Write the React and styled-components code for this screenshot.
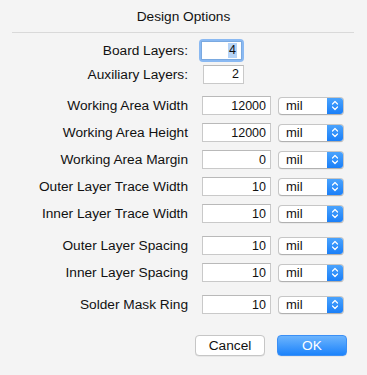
import React from 'react'
import styled, { createGlobalStyle } from 'styled-components'

// Global
const Global = createGlobalStyle`
  html, body {
    margin: 0;
    padding: 0;
    background: #f4f4f4;
  }
  body {
    font-family: "Liberation Sans", Arial, sans-serif;
    font-size: 13px;
    color: #111;
  }
`

// Styling
const Dialog = styled.div`
  width: 367px;
  height: 375px;
  background: #f4f4f4;
  display: flex;
  flex-direction: column;
  overflow: hidden;
`
const Title = styled.div`
  height: 32px;
  line-height: 33px;
  text-align: center;
  font-size: 13.7px;
`
const Separator = styled.div`
  height: 1px;
  margin: 0 13px 0 12px;
  background: #d9d9d9;
`
const Group = styled.div`
  display: flex;
  flex-direction: column;
  margin-top: ${p => p.$gap || 0}px;
`
const Row = styled.div`
  display: flex;
  align-items: center;
  height: ${p => p.$h || 27}px;
`
const Label = styled.div`
  width: 188px;
  text-align: right;
  font-size: 13.7px;
  white-space: nowrap;
`
const Field = styled.div`
  box-sizing: border-box;
  width: ${p => p.$w}px;
  height: ${p => p.$h || 19}px;
  margin-left: ${p => p.$ml || 14}px;
  background: #fff;
  border: 1px solid #c9c9c9;
  border-top-color: #b9b9b9;
  display: flex;
  align-items: center;
  justify-content: flex-end;
  padding-right: 4px;
  font-size: 12.5px;
`
const FocusRing = styled.div`
  margin-left: 11px;
  padding: 2px;
  border-radius: 4px;
  background: #8ab9f2;
  display: flex;
`
const FocusField = styled(Field)`
  margin-left: 0;
  border-color: #7aa9e0;
`
const Selected = styled.span`
  background: #b5d3f7;
  padding: 0 1px;
  line-height: 15px;
`
const Select = styled.div`
  box-sizing: border-box;
  width: 66px;
  height: 18px;
  margin-left: 7px;
  border: 1px solid #c6c6c6;
  border-bottom-color: #b0b0b0;
  border-radius: 4px;
  background: #fff;
  display: flex;
  align-items: stretch;
  overflow: hidden;
  box-shadow: 0 0.5px 0.5px rgba(0, 0, 0, 0.08);
`
const SelectText = styled.div`
  flex: 1;
  display: flex;
  align-items: center;
  padding-left: 7px;
  font-size: 13px;
`
const Stepper = styled.div`
  width: 16px;
  background: linear-gradient(#4aa3fd, #1a7ff8);
  display: flex;
  align-items: center;
  justify-content: center;
`
const Buttons = styled.div`
  display: flex;
  justify-content: flex-end;
  gap: 12px;
  padding-right: 20px;
  margin-top: 17px;
`
const Button = styled.div`
  box-sizing: border-box;
  width: 70px;
  height: 21px;
  border-radius: 4px;
  display: flex;
  align-items: center;
  justify-content: center;
  font-size: 13.7px;
  background: ${p => (p.$primary ? 'linear-gradient(#6cb4fd, #1c83fb)' : '#fff')};
  color: ${p => (p.$primary ? '#fff' : '#111')};
  border: 1px solid ${p => (p.$primary ? '#3b8ff5' : '#c6c6c6')};
  box-shadow: 0 0.5px 0.5px rgba(0, 0, 0, 0.1);
`

function Chevrons() {
  return (
    <svg width="8" height="11" viewBox="0 0 8 11">
      <path d="M1.5 4 L4 1.5 L6.5 4 M1.5 7 L4 9.5 L6.5 7" fill="none" stroke="#fff" strokeWidth="1.2" strokeLinecap="round" strokeLinejoin="round" />
    </svg>
  )
}

function UnitRow({ label, value }) {
  return (
    <Row>
      <Label>{label}</Label>
      <Field $w={69}>{value}</Field>
      <Select>
        <SelectText>mil</SelectText>
        <Stepper><Chevrons /></Stepper>
      </Select>
    </Row>
  )
}

function App() {
  return (
    <Dialog>
      <Global />
      <Title>Design Options</Title>
      <Separator />
      <Group $gap={5}>
        <Row $h={24}>
          <Label>Board Layers:</Label>
          <FocusRing>
            <FocusField $w={41}><Selected>4</Selected></FocusField>
          </FocusRing>
        </Row>
        <Row $h={24}>
          <Label>Auxiliary Layers:</Label>
          <Field $w={41} $ml={15}>2</Field>
        </Row>
      </Group>
      <Group $gap={6}>
        <UnitRow label="Working Area Width" value="12000" />
        <UnitRow label="Working Area Height" value="12000" />
        <UnitRow label="Working Area Margin" value="0" />
        <UnitRow label="Outer Layer Trace Width" value="10" />
        <UnitRow label="Inner Layer Trace Width" value="10" />
      </Group>
      <Group $gap={5}>
        <UnitRow label="Outer Layer Spacing" value="10" />
        <UnitRow label="Inner Layer Spacing" value="10" />
      </Group>
      <Group $gap={5}>
        <UnitRow label="Solder Mask Ring" value="10" />
      </Group>
      <Buttons>
        <Button>Cancel</Button>
        <Button $primary>OK</Button>
      </Buttons>
    </Dialog>
  )
}

export default App
